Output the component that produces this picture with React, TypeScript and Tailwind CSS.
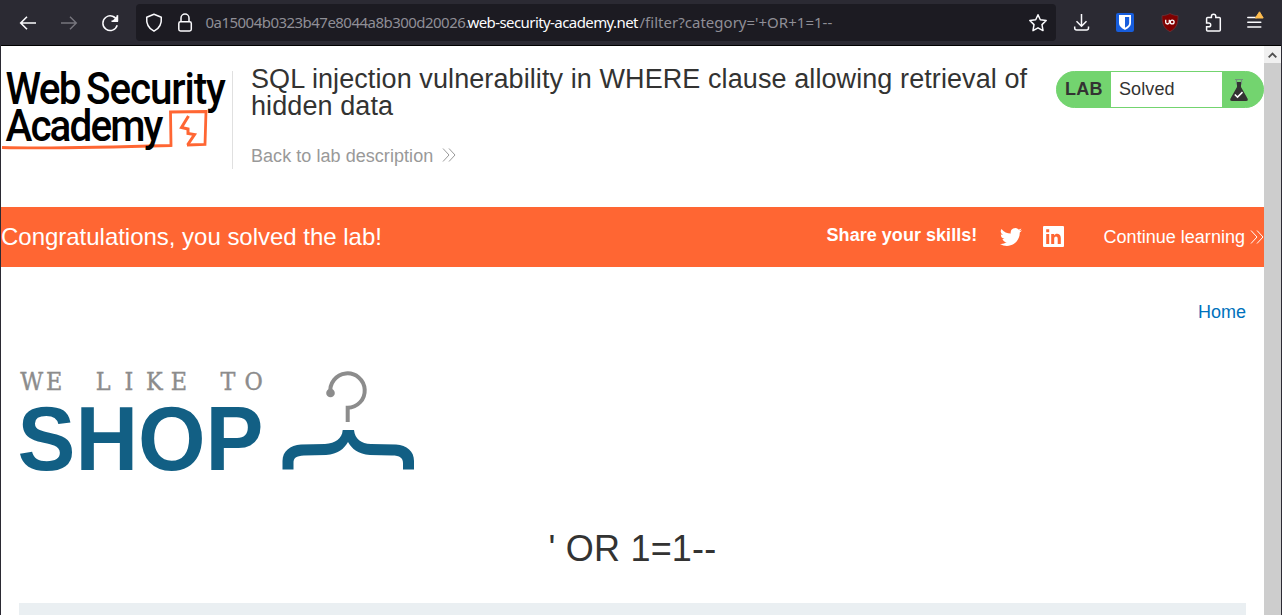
import React from "react";

const GLYPH_X = [20.2, 46, 70, 95.8, 124.6, 146, 170.7, 190, 220.4, 244.6];
const TAGLINE = "WE LIKE TO";

function Chevrons({ className }: { className: string }) {
  return (
    <svg width="14" height="14" viewBox="0 0 14 14" fill="none" stroke="currentColor" strokeWidth="1" className={className}>
      <path d="M1 .5 7 7 1 13.5M7 .5 13 7 7 13.5" />
    </svg>
  );
}

function Toolbar() {
  return (
    <div className="flex h-[46px] shrink-0 items-start border-b border-black bg-[#2b2a33] text-[#fbfbfe]">
      <svg width="135" height="45" viewBox="1 0 135 45" fill="none" stroke="currentColor" strokeWidth="1.6" className="shrink-0">
        <path d="M36 23H21M27 16.7 20.7 23l6.3 6.3" />
        <path d="M61 23h15M70 16.7 76.3 23 70 29.3" stroke="#77767e" strokeWidth="1.4" />
        <path d="M117.2 21.2A7.3 7.3 0 1 0 117.2 25.2M111.5 21.2h5.8v-6" strokeWidth="1.5" />
        <path d="M118.2 15v6.2H112z" fill="currentColor" stroke="none" />
      </svg>
      <div className="mt-1 flex h-[37px] w-[920px] shrink-0 items-center rounded-[4px] bg-[#1c1b22]">
        <svg width="69" height="37" viewBox="136 4 69 37" fill="none" stroke="currentColor" strokeWidth="1.5" className="shrink-0">
          <path d="M154 14.2 161.3 17.2C161.8 23 160 28.2 154 31.2C148 28.2 146.2 23 146.7 17.2Z" strokeLinejoin="round" />
          <rect x="178.8" y="21.7" width="12.5" height="9.3" rx="1.7" />
          <path d="M181 21.5V18a4 4 0 0 1 8 0v3.5" />
        </svg>
        <div className="-mt-px flex whitespace-nowrap pl-[0.5px] font-['Noto_Sans',sans-serif] text-[15px] leading-[20px] text-[#8f8e96]">
          <span className="w-[262px] tracking-[-0.53px]">0a15004b0323b47e8044a8b300d20026.</span>
          <span className="w-[172px] tracking-[-0.58px] text-[#fbfbfe]">web-security-academy.net</span>
          <span className="w-[192px] tracking-[0.02px]">/filter?category='+OR+1=1--</span>
        </div>
        <svg width="24" height="24" viewBox="1026 11 24 24" fill="none" stroke="currentColor" strokeWidth="1.5" strokeLinejoin="round" className="ml-auto mr-[6px]">
          <path d="m1038 14.7 2.3 5.1 5.9.7-4.2 4.1 1 6-5-2.8-5 2.8 1-6-4.2-4.1 5.9-.7Z" />
        </svg>
      </div>
      <svg width="225" height="45" viewBox="1056 0 225 45" fill="none" stroke="currentColor" strokeWidth="1.5" className="shrink-0">
        <path d="M1081.5 14v12M1076.5 21.3l5 5 5-5M1074.7 26.5v1.5a2 2 0 0 0 2 2h9.8a2 2 0 0 0 2-2v-1.5" />
        <rect x="1116" y="13" width="18" height="19" rx="2" fill="#175ddc" stroke="none" />
        <path d="M1119 15h12v8c0 3.2-3 5.4-6 7-3-1.6-6-3.8-6-7Z" fill="#fff" stroke="none" />
        <path d="M1125 17h4.2v6c0 2-2 3.6-4.2 4.8Z" fill="#175ddc" stroke="none" />
        <path d="M1170 13.5c2.4 1.3 5 2 8 2.2.2 7.2-1.2 12.3-8 16-6.800-3.700-8.200-8.800-8-16 3-.2 5.600-.9 8-2.200Z" fill="#800000" stroke="#66343b" strokeWidth=".8" />
        <path d="M1165.700 19.800v2.400a1.700 1.700 0 0 0 3.600 0v-2.400" stroke="#fff" strokeWidth="1.3" />
        <circle cx="1172.200" cy="22" r="1.900" stroke="#fff" strokeWidth="1.3" />
        <path d="M1206.600 20.800v-2.300a1 1 0 0 1 1-1h3.800v-1a2.200 2.200 0 0 1 4.400 0v1h3.500a1 1 0 0 1 1 1v11.500a1 1 0 0 1-1 1h-11.700a1 1 0 0 1-1-1v-3.200h2.200a1.900 1.900 0 0 0 0-3.800h-2.200Z" />
        <path d="M1247.800 17.500h8.500M1247.800 22.300h13M1247.800 27h13" strokeLinecap="round" />
        <path d="M1259.500 11.800 1263.200 18h-7.800Z" fill="#ffbd4f" stroke="#ffbd4f" strokeWidth="1" strokeLinejoin="round" />
      </svg>
    </div>
  );
}

function AcademyLogo() {
  return (
    <svg width="231" height="98" viewBox="1 71 231 98" className="shrink-0 overflow-visible font-[Roboto,sans-serif] font-medium">
      <g fontSize="44" fill="#000" transform="scale(.92 1)">
        <text x="6" y="104" textLength="82.500" lengthAdjust="spacing">Web</text>
        <text x="93.500" y="104" textLength="152" lengthAdjust="spacing">Security</text>
      </g>
      <g fill="none" stroke="#ff6633">
        <path d="M2 147.500C50 149 120 147 171 145.500L170.500 112L206 111.500L205 144.500L187 145" strokeWidth="2.800" />
        <path d="M188.500 116L181.500 127.500L188 129L188 133.500L194.500 134.500L187.500 145" strokeWidth="3" />
      </g>
      <text x="6" y="141" fontSize="44" fill="#000" textLength="171.500" lengthAdjust="spacing" transform="scale(.92 1)">Academy</text>
    </svg>
  );
}

function LabStatus() {
  return (
    <div className="flex h-[37px] w-[208px] shrink-0 items-stretch overflow-hidden rounded-full border border-[#73d46f] bg-[#73d46f] text-[18px]">
      <div className="flex w-[54px] items-center pl-2 text-[18px] font-bold tracking-[0.2px]">LAB</div>
      <div className="flex w-[111px] items-center bg-white pl-2 tracking-[0.1px]">Solved</div>
      <svg width="41" height="35" viewBox="1222 72 41 35">
        <path d="M1235 79.500h8M1236.500 80v4h5v-4" fill="none" stroke="#71907b" strokeWidth="1.200" />
        <path d="M1237 82h4v5l6.500 11.500q1 2.500-1.500 2.500h-14q-2.500 0-1.500-2.500L1237 87Z" fill="#333332" />
        <path d="m1234.800 94.500 2.700 2.600 5-5" fill="none" stroke="#fff" strokeWidth="1.500" />
      </svg>
    </div>
  );
}

function ShopLogo() {
  return (
    <svg width="400" height="106" viewBox="19 367 400 106" className="block overflow-visible">
      <text transform="scale(.95 1)" x={GLYPH_X.map((x) => x / 0.95).join(" ")} y="390" fontSize="23.500" fill="#8c8c8c" stroke="#8c8c8c" strokeWidth=".4" className="font-['DejaVu_Serif',serif]">{TAGLINE}</text>
      <text x="17.500" y="469.700" fontSize="91" textLength="246" lengthAdjust="spacingAndGlyphs" fill="#125f84" className="font-['Liberation_Sans',Arial,sans-serif] font-bold">SHOP</text>
      <circle cx="330.500" cy="393" r="4.300" fill="#8c8c8c" />
      <path d="M330.500 393A17.200 17.200 0 1 1 347.700 407.700V422" fill="none" stroke="#8c8c8c" strokeWidth="4" />
      <path d="M342.700 430H354C355 439 361 443.700 371 444L396 444.500C407 445.500 414 451 414 461V469.500H403V463C403 458 400 455.500 392 455.500L370 455C358 454 352 449 348 442C344 449 338 454 326 455L304 455.500C296 456 293.500 458 293.500 463V469.500H282.500V461C282.500 451 290 445.500 301 444.500L325 444C335.500 443 342 439 342.700 430Z" fill="#125f84" />
    </svg>
  );
}

export default function App() {
  return (
    <div className="flex h-[615px] w-[1282px] flex-col overflow-hidden border-x border-[#2b2a33] bg-white font-['Liberation_Sans',Arial,sans-serif] text-[18px] text-[#333332]">
      <Toolbar />
      <div className="flex min-h-0 flex-1">
        <main className="flex min-w-0 flex-1 flex-col">
          <header className="flex h-[161px] shrink-0 items-start pt-[25px]">
            <AcademyLogo />
            <div className="flex w-[824px] shrink-0">
              <div className="h-[98px] w-px bg-[#e0e0e0]" />
              <div className="-mt-[5px] ml-[18px]">
                <h2 className="w-[790px] text-[27px] leading-[27px] tracking-[0.09px]">SQL injection vulnerability in WHERE clause allowing retrieval of hidden data</h2>
                <a className="mt-[26px] flex items-center gap-[9px] leading-[21px] tracking-[0.05px] text-[#999]">
                  Back to lab description
                  <Chevrons className="-mt-[3px]" />
                </a>
              </div>
            </div>
            <LabStatus />
          </header>
          <section className="flex h-[60px] shrink-0 items-center bg-[#ff6633] text-white">
            <h3 className="text-[24px] tracking-[-0.02px]">Congratulations, you solved the lab!</h3>
            <div className="ml-auto flex items-center">
              <span className="mb-1 w-[173px] font-bold tracking-[0.04px]">Share your skills!</span>
              <svg width="22" height="22" viewBox="0 0 24 24" fill="currentColor">
                <path d="M23.950 4.570a10 10 0 0 1-2.820.770 4.950 4.950 0 0 0 2.160-2.720c-.950.550-2 .950-3.130 1.180a4.920 4.920 0 0 0-8.380 4.480A13.970 13.970 0 0 1 1.640 3.160a4.920 4.920 0 0 0 1.520 6.570 4.900 4.900 0 0 1-2.230-.610v.060a4.920 4.920 0 0 0 3.950 4.820 5 5 0 0 1-2.210.090 4.940 4.940 0 0 0 4.600 3.420A9.870 9.870 0 0 1 0 19.540a13.990 13.990 0 0 0 7.550 2.210c9.050 0 14-7.500 14-13.980l-.020-.630a10 10 0 0 0 2.460-2.550Z" />
              </svg>
              <svg width="21" height="21" viewBox="0 0 21 21" className="-mt-px ml-[21px]">
                <rect width="21" height="21" rx="1" fill="#fff" />
                <path d="M3.200 8h3v10h-3zM3.200 3.200h3v3h-3zM8.200 8h2.900v1.400c1.500-2.500 6.700-2.200 6.700 2.600v6h-3.100v-5.300c0-3-3.500-2.700-3.500 0V18h-3Z" fill="#ff6633" />
              </svg>
              <a className="ml-[40px] flex items-center gap-[5px] whitespace-nowrap tracking-[0.02px]">
                Continue learning
                <Chevrons className="" />
              </a>
            </div>
          </section>
          <section className="flex flex-col px-[18px]">
            <a className="mt-[35px] self-end leading-[21px] text-[#0071bc]">Home</a>
            <div className="mt-[44px]">
              <ShopLogo />
            </div>
            <h1 className="mt-[56px] text-center text-[36px] leading-[40px] tracking-[0.2px]">' OR 1=1--</h1>
            <div className="mt-[34px] h-[12px] bg-[#eaeff2]" />
          </section>
        </main>
        <aside className="w-[17px] shrink-0 bg-[#cdcdcd]">
          <div className="flex h-[17px] items-center justify-center bg-[#f0f0f0]">
            <svg width="9" height="6" viewBox="0 0 9 6" fill="none" stroke="#505050" strokeWidth="1.900">
              <path d="M.7 5.300 4.500 1.500l3.800 3.800" />
            </svg>
          </div>
        </aside>
      </div>
    </div>
  );
}
